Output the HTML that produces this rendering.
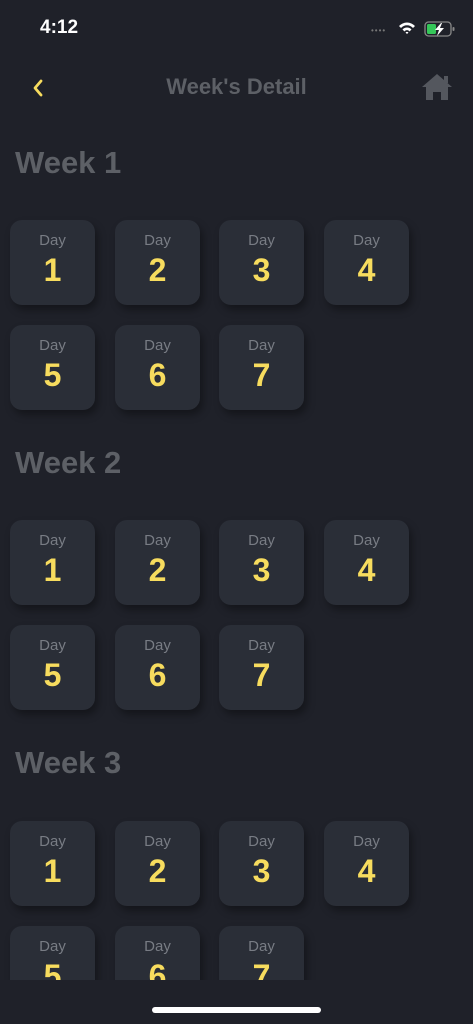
<!DOCTYPE html><html><head><style>
body{margin:0;width:473px;height:1024px;background:#1f2129;font-family:"Liberation Sans",sans-serif;position:relative;overflow:hidden}
.a{position:absolute}
.card{position:absolute;width:85px;height:85px;border-radius:12px;background:#2a2e37;box-shadow:3px 5px 8px rgba(0,0,0,.35);text-align:center}
.card .d{color:#787c84;font-size:15px;margin-top:12px}
.card .n{color:#f7dc5e;font-size:32px;font-weight:bold;margin-top:3px}
.wk{position:absolute;left:15px;color:#5d6066;font-size:31px;font-weight:bold}
#clip{position:absolute;left:0;top:0;width:473px;height:980px;overflow:hidden}
</style></head><body>
<div class="a" style="left:40px;top:17px;color:#fff;font-size:19px;font-weight:bold">4:12</div>
<div class="a" style="left:371px;top:26px;color:#777;font-size:8px;letter-spacing:1px">••••</div>
<svg class="a" style="left:398px;top:21px" width="18" height="15" viewBox="0 0 18 15"><path d="M1 5a11 11 0 0 1 16 0l-2 2a8 8 0 0 0-12 0z M4.5 8.5a6 6 0 0 1 9 0l-2 2a3 3 0 0 0-5 0z M7.5 11.5a2 2 0 0 1 3 0L9 13z" fill="#fff"/></svg>
<svg class="a" style="left:424px;top:20px" width="32" height="18" viewBox="0 0 32 18"><rect x="1" y="2" width="26" height="14" rx="3.5" fill="none" stroke="#888" stroke-width="1.3"/><rect x="3" y="4" width="9" height="10" rx="1.5" fill="#35c759"/><rect x="28.5" y="7" width="2" height="4" rx="1" fill="#888"/><path d="M17 3l-6 7h4l-2 6 7-8h-4l2-5z" fill="#fff"/></svg>
<svg class="a" style="left:30px;top:78px" width="16" height="20" viewBox="0 0 16 20"><path d="M11 3L5 10l6 7" fill="none" stroke="#f7dc5e" stroke-width="2.8" stroke-linecap="round" stroke-linejoin="round"/></svg>
<div class="a" style="left:0;width:473px;top:74px;text-align:center;color:#5d6066;font-size:22px;font-weight:bold">Week's Detail</div>
<svg class="a" style="left:420px;top:72px" width="34" height="30" viewBox="0 0 34 30"><path d="M2 15L17 2l15 13h-4v13h-7v-8h-8v8H6V15z" fill="#54575e"/><rect x="24" y="4" width="4" height="7" fill="#54575e"/></svg>
<div id="clip">
<div class="wk" style="top:145px">Week 1</div>
<div class="wk" style="top:445px">Week 2</div>
<div class="wk" style="top:745px">Week 3</div>
</div>
<script>
var c=document.getElementById('clip'),xs=[10,115,219,324],tops=[220,520,821];
tops.forEach(function(t){for(var i=0;i<7;i++){var r=Math.floor(i/4),col=i%4;var e=document.createElement('div');e.className='card';e.style.left=xs[col]+'px';e.style.top=(t+r*104.5)+'px';e.innerHTML='<div class="d">Day</div><div class="n">'+(i+1)+'</div>';c.appendChild(e);}});
</script>
<div class="a" style="left:152px;top:1007px;width:169px;height:6px;border-radius:3px;background:#fff"></div>
</body></html>
